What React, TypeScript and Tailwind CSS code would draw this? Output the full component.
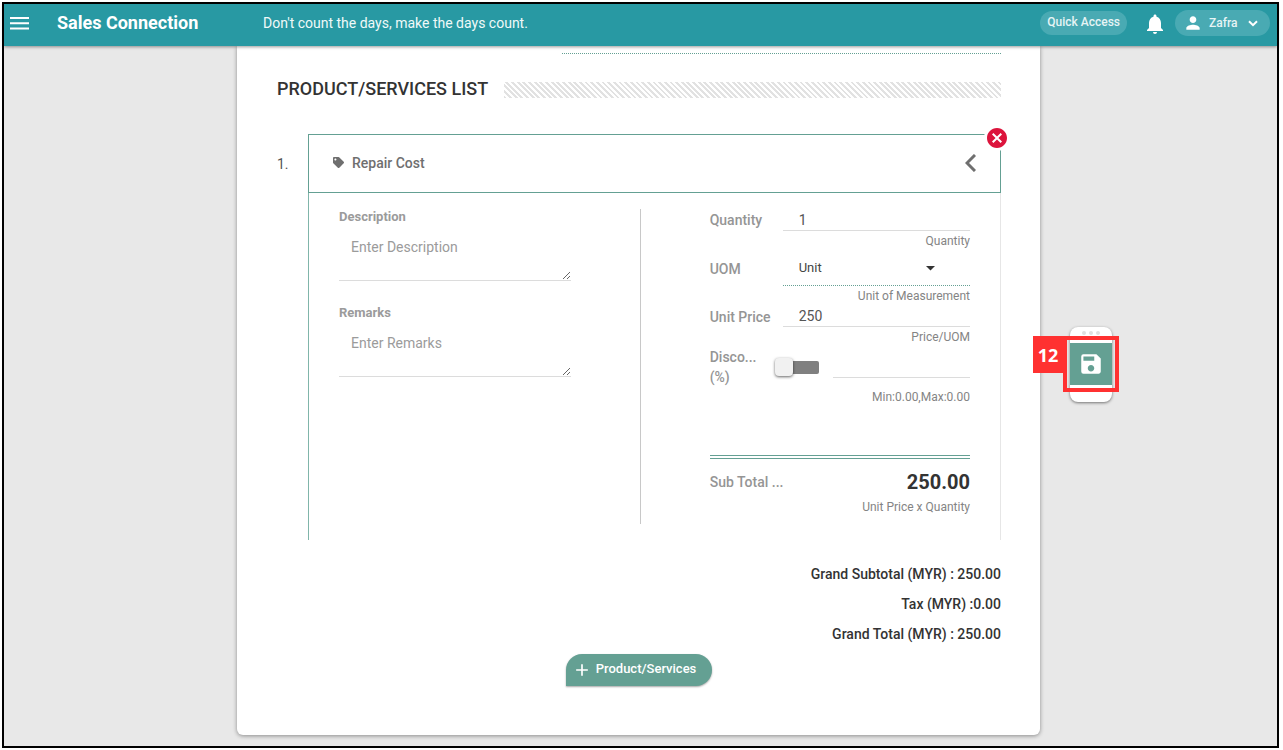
import { ReactNode } from 'react';
import { FaTag } from 'react-icons/fa';
import { MdAdd, MdCancel, MdNotifications, MdPerson, MdSave } from 'react-icons/md';

const totals = [
  'Grand Subtotal (MYR) : 250.00',
  'Tax (MYR) :0.00',
  'Grand Total (MYR) : 250.00',
];

const MenuIcon = () => (
  <svg width="19" height="13" viewBox="0 0 19 13" fill="currentColor">
    <path d="M0 0h19v2H0zM0 5.3h19v2H0zM0 10.6h19v2H0z" />
  </svg>
);

const TopBar = () => (
  <header className="relative z-10 flex h-[42px] items-center bg-[#2899a3] pb-1 pl-1.5 pr-[7px] text-white shadow-[0_1px_3px_rgba(0,0,0,0.4)]">
    <button type="button" aria-label="Menu">
      <MenuIcon />
    </button>
    <h1 className="ml-7 w-[206px] text-lg font-bold leading-6">Sales Connection</h1>
    <p className="flex-1 text-sm text-[#f0f9f9]">Don't count the days, make the days count.</p>
    <button
      type="button"
      className="h-6 rounded-full bg-[#49aab3] px-[7px] pb-0.5 text-xs font-medium text-[#e6f4f5]"
    >
      Quick Access
    </button>
    <button type="button" aria-label="Notifications" className="ml-4 pt-0.5">
      <MdNotifications size={24} />
    </button>
    <button
      type="button"
      className="ml-2 flex h-[26px] w-[95px] items-center rounded-full bg-[#49aab3] pl-2 pr-3 text-xs font-medium text-[#e6f4f5]"
    >
      <MdPerson size={20} className="text-white" />
      <span className="ml-1.5 flex-1 text-left">Zafra</span>
      <svg width="10" height="7" viewBox="0 0 10 7" fill="none" stroke="#fff" strokeWidth="2">
        <path d="M1 1.2l4 4 4-4" />
      </svg>
    </button>
  </header>
);

const TextBlock = ({ id, label, placeholder }: { id: string; label: string; placeholder: string }) => (
  <div className="flex flex-col">
    <label htmlFor={id} className="text-[13px] font-bold leading-4 text-[#9b9b9b]">
      {label}
    </label>
    <textarea
      id={id}
      placeholder={placeholder}
      className="mt-3 h-11 resize border-b border-[#dcdcdc] px-3 text-sm leading-5 placeholder:text-[#9b9b9b] focus:outline-none"
    />
  </div>
);

const FieldRow = ({
  id,
  label,
  hint,
  children,
}: {
  id: string;
  label: string;
  hint: string;
  children: ReactNode;
}) => (
  <div>
    <div className="flex items-center">
      <label htmlFor={id} className="w-[73px] text-sm font-medium leading-5 text-[#959595]">
        {label}
      </label>
      {children}
    </div>
    <p className="text-right text-xs leading-5 text-[#848484]">{hint}</p>
  </div>
);

const Pricing = () => (
  <div className="pl-[69px] pr-[30px]">
    <FieldRow id="quantity" label="Quantity" hint="Quantity">
      <input
        id="quantity"
        defaultValue="1"
        className="h-[22px] min-w-0 flex-1 border-b border-[#dcdcdc] px-4 text-sm text-[#555] focus:outline-none"
      />
    </FieldRow>
    <FieldRow id="uom" label="UOM" hint="Unit of Measurement">
      <div className="relative h-[35px] min-w-0 flex-1 border-b border-dotted border-[#64a093]">
        <select
          id="uom"
          className="h-full w-full appearance-none px-4 text-[13px] text-[#444] focus:outline-none"
        >
          <option>Unit</option>
        </select>
        <svg
          className="pointer-events-none absolute right-[35px] top-[15px]"
          width="9"
          height="5"
          viewBox="0 0 9 5"
          fill="#333"
        >
          <path d="M0 0h9L4.5 4.5z" />
        </svg>
      </div>
    </FieldRow>
    <FieldRow id="price" label="Unit Price" hint="Price/UOM">
      <input
        id="price"
        defaultValue="250"
        className="h-[21px] min-w-0 flex-1 border-b border-[#dcdcdc] px-4 text-sm text-[#555] focus:outline-none"
      />
    </FieldRow>
    <div className="flex h-10 items-center">
      <label
        htmlFor="discount"
        className="w-[50px] text-sm font-medium leading-5 text-[#959595]"
      >
        Disco... (%)
      </label>
      <input
        type="checkbox"
        aria-label="Enable discount"
        className="relative ml-4 h-[13px] w-[43px] appearance-none rounded-xs bg-[#808080] before:absolute before:-left-px before:-top-[3px] before:size-[18px] before:rounded before:bg-[#f1f1f1] before:shadow-[0_1px_3px_rgba(0,0,0,0.6)]"
      />
      <input
        id="discount"
        className="ml-3.5 h-[31px] min-w-0 flex-1 self-start border-b border-[#dcdcdc] text-sm focus:outline-none"
      />
    </div>
    <p className="text-right text-xs leading-5 text-[#848484]">Min:0.00,Max:0.00</p>
    <hr className="mt-12 h-1 border-y border-[#64a093]" />
    <div className="mt-2 flex h-[30px] items-center justify-between">
      <span className="text-sm font-medium text-[#959595]">Sub Total ...</span>
      <span className="text-xl font-bold text-[#333]">250.00</span>
    </div>
    <p className="text-right text-xs leading-5 text-[#848484]">Unit Price x Quantity</p>
  </div>
);

const LineItem = () => (
  <div className="mt-[35px] flex">
    <span className="w-[31px] pt-5 text-sm leading-5 text-[#555]">1.</span>
    <div className="min-w-0 flex-1">
      <div className="relative flex h-[59px] items-center border border-[#64a093] px-6 pb-0.5">
        <FaTag size={11} className="text-[#6f6f6f]" />
        <h3 className="ml-2 flex-1 text-sm font-medium text-[#6f6f6f]">Repair Cost</h3>
        <button type="button" aria-label="Collapse">
          <svg width="11" height="18" viewBox="0 0 11 18" fill="none" stroke="#6f6f6f" strokeWidth="3">
            <path d="M10 1L2 9l8 8" />
          </svg>
        </button>
        <button
          type="button"
          aria-label="Remove item"
          className="absolute -right-[10px] -top-[10px] flex size-[26px] items-center justify-center rounded-full bg-white text-[#dc143c]"
        >
          <MdCancel size={24} />
        </button>
      </div>
      <div className="grid grid-cols-[minmax(0,48fr)_minmax(0,52fr)] border-l border-r border-l-[#80b5aa] border-r-[#e6e6e6] py-4">
        <div className="flex h-[315px] flex-col gap-6 border-r border-[#c8c8c8] pl-[30px] pr-[69px]">
          <TextBlock id="description" label="Description" placeholder="Enter Description" />
          <TextBlock id="remarks" label="Remarks" placeholder="Enter Remarks" />
        </div>
        <Pricing />
      </div>
    </div>
  </div>
);

const SaveDock = () => (
  <aside className="absolute left-full top-[281px] ml-[30px] h-[75px] w-[42px] rounded-lg bg-white pt-1 shadow-[0_1px_3px_rgba(0,0,0,0.5)]">
    <div className="flex h-3 justify-center gap-[3px]">
      <i className="size-1 rounded-full bg-[#e0e0e0]" />
      <i className="size-1 rounded-full bg-[#e0e0e0]" />
      <i className="size-1 rounded-full bg-[#e0e0e0]" />
    </div>
    <button
      type="button"
      aria-label="Save"
      className="flex h-[42px] w-full items-center justify-center bg-[#64a093] text-white"
    >
      <MdSave size={26} />
    </button>
    <div className="pointer-events-none absolute -left-[7px] top-[9px] h-14 w-14 border-4 border-[#ff3131]" />
    <span className="absolute -left-[37px] top-[9px] flex h-[37px] w-[30px] items-center justify-center bg-[#ff3131] font-['Open_Sans',sans-serif] text-lg font-bold text-white">
      12
    </span>
  </aside>
);

export default function App() {
  return (
    <div className="flex min-h-screen bg-white py-0.5 pl-0.5 pr-1 font-[Roboto,sans-serif]">
      <div className="flex flex-1 flex-col border-2 border-black bg-[#e8e8e8]">
        <TopBar />
        <main className="flex-1 pb-[11px] pr-1">
          <section className="relative mx-auto w-full max-w-[803px] rounded-b-md bg-white pb-[49px] pl-10 pr-[39px] pt-[7px] shadow-[0_1px_4px_rgba(0,0,0,0.4)]">
            <div className="ml-auto w-[439px] border-b border-dotted border-[#64a093]" />
            <div className="mt-[25px] flex h-5 items-center gap-4">
              <h2 className="text-lg font-medium text-[#333]">PRODUCT/SERVICES LIST</h2>
              <div className="mt-0.5 h-4 flex-1 bg-[repeating-linear-gradient(45deg,#e2e2e2_0_2px,#fff_2px_4px)]" />
            </div>
            <LineItem />
            <div className="mt-6 flex flex-col gap-[10px] text-right text-sm font-medium leading-5 text-[#333]">
              {totals.map((line) => (
                <p key={line}>{line}</p>
              ))}
            </div>
            <button
              type="button"
              className="mx-auto mt-[10px] flex h-8 items-center rounded-full rounded-bl bg-[#64a093] pl-1.5 pr-4 text-[13px] font-medium text-white shadow-[0_1px_2px_rgba(0,0,0,0.35)]"
            >
              <MdAdd size={20} />
              <span className="ml-1 pb-0.5">Product/Services</span>
            </button>
            <SaveDock />
          </section>
        </main>
      </div>
    </div>
  );
}
